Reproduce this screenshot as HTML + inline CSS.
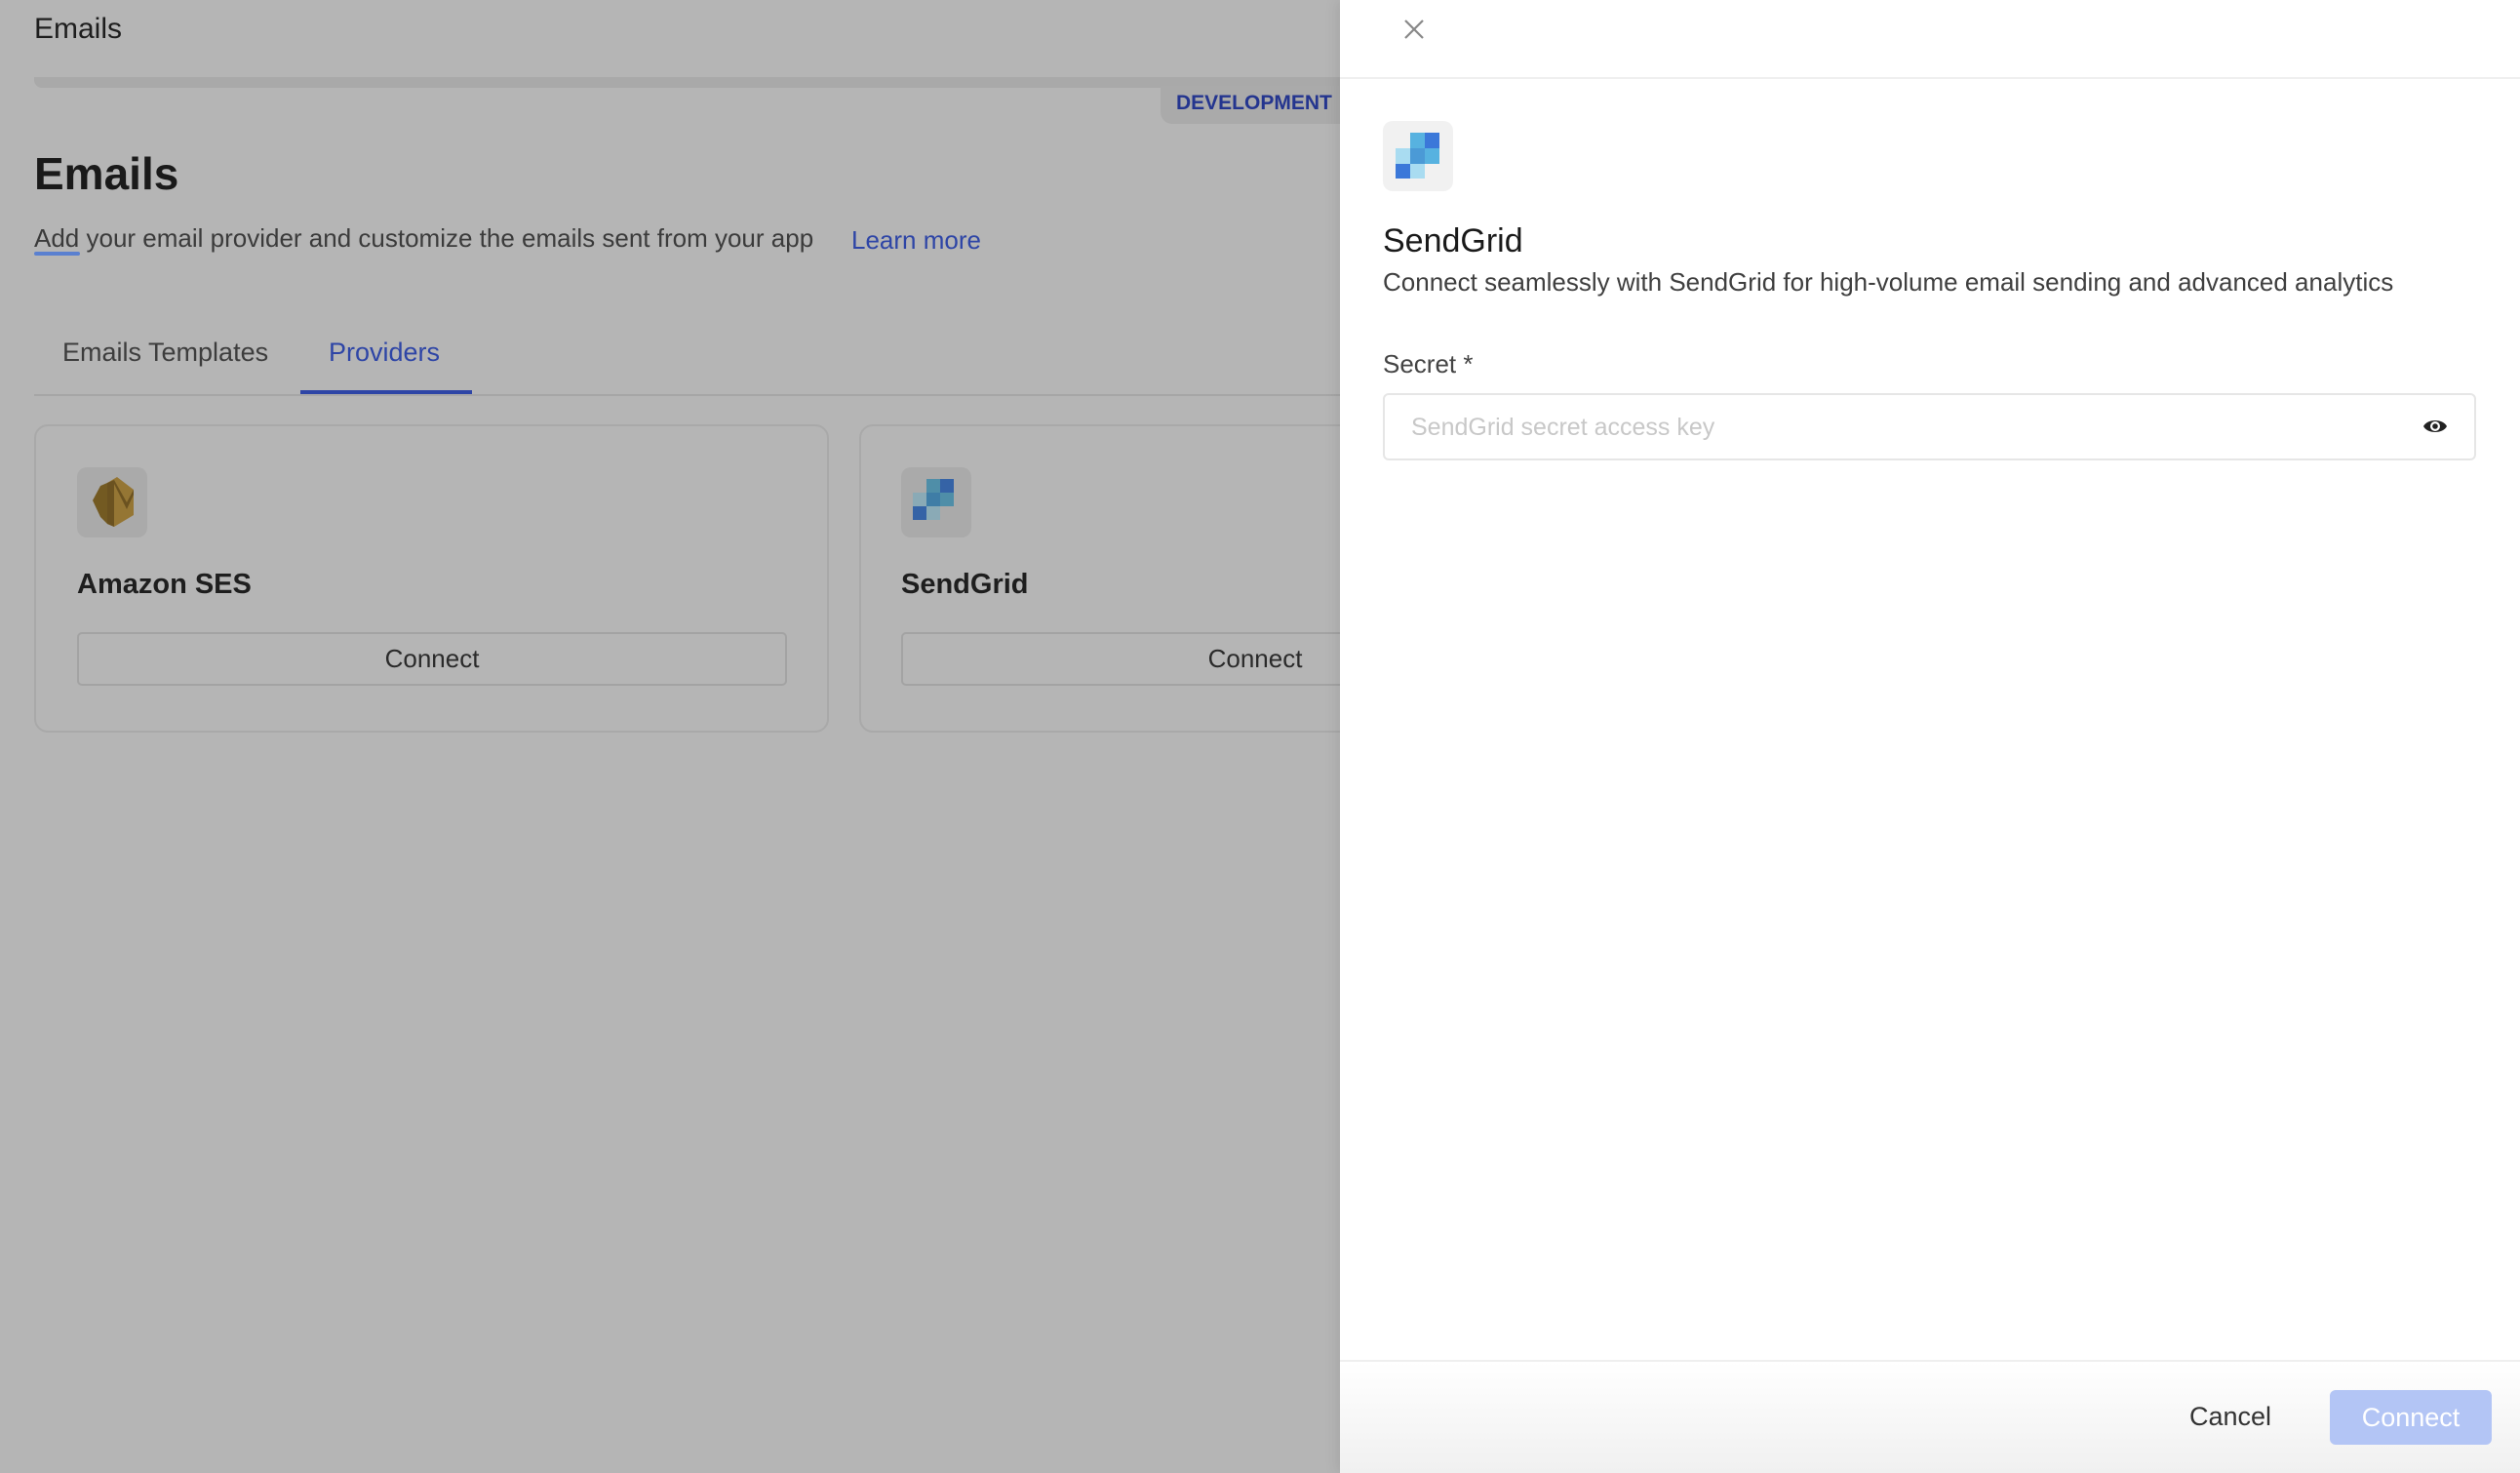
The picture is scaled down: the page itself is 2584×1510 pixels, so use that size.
<!DOCTYPE html>
<html><head><meta charset="utf-8"><style>
*{margin:0;padding:0;box-sizing:border-box}
body{width:2584px;height:1510px;overflow:hidden;background:#b5b5b5;font-family:"Liberation Sans",sans-serif;position:relative}
.a{position:absolute;white-space:nowrap}
</style></head><body>
<div class="a" style="left:35px;top:13px;font-size:30px;color:#1e1e1e">Emails</div>
<div class="a" style="left:35px;top:79px;width:1339px;height:11px;background:#a9a9a9;border-radius:0 0 0 8px"></div>
<div class="a" style="left:1190px;top:88px;width:190px;height:39px;background:#aaaaaa;border-radius:0 0 0 12px"></div>
<div class="a" style="left:1206px;top:94px;font-size:21px;color:#24358f;font-weight:bold">DEVELOPMENT</div>
<div class="a" style="left:35px;top:151px;font-size:46px;font-weight:bold;color:#1a1a1a">Emails</div>
<div class="a" style="left:35px;top:229px;font-size:26px;color:#3b3b3b">Add your email provider and customize the emails sent from your app</div>
<div class="a" style="left:35px;top:258px;width:47px;height:4px;background:#5a80d0;border-radius:2px"></div>
<div class="a" style="left:873px;top:231px;font-size:26px;color:#2e45a6;font-weight:500">Learn more</div>
<div class="a" style="left:64px;top:346px;font-size:27px;color:#3d3d3d;font-weight:500">Emails Templates</div>
<div class="a" style="left:337px;top:346px;font-size:27px;color:#2e45a6;font-weight:500">Providers</div>
<div class="a" style="left:35px;top:404px;width:1339px;height:2px;background:#a6a6a6"></div>
<div class="a" style="left:308px;top:400px;width:176px;height:4px;background:#2e45a6"></div>

<div class="a" style="left:35px;top:435px;width:815px;height:316px;border:2px solid #a9a9a9;border-radius:14px"></div>
<div class="a" style="left:79px;top:479px;width:72px;height:72px;background:#aaaaaa;border-radius:10px">
<svg width="72" height="72" viewBox="79 479 72 72"><polygon points="95,513 103,498 110,495 110,537 103,530" fill="#735a22"/><polygon points="110,495 120,489 137,502 137,528 117,540 110,537" fill="#957634"/><polygon points="110,495 117,492 117,540 110,537" fill="#6b5220"/><polygon points="117,492 130,515 137,502 137,507 130,522 117,496" fill="#6b5220"/></svg></div>
<div class="a" style="left:79px;top:583px;font-size:29px;font-weight:bold;color:#1e1e1e">Amazon SES</div>
<div class="a" style="left:79px;top:648px;width:728px;height:55px;border:2px solid #a3a3a3;border-radius:5px;font-size:26px;color:#2a2a2a;text-align:center;line-height:51px">Connect</div>

<div class="a" style="left:881px;top:435px;width:815px;height:316px;border:2px solid #a9a9a9;border-radius:14px"></div>
<div class="a" style="left:924px;top:479px;width:72px;height:72px;background:#aaaaaa;border-radius:10px">
<svg width="72" height="72" viewBox="0 0 72 72"><rect x="26" y="12" width="14" height="14" fill="#4f8ea8"/><rect x="40" y="12" width="14" height="14" fill="#3563a6"/><rect x="12" y="26" width="14" height="14" fill="#8aaab6"/><rect x="26" y="26" width="14" height="14" fill="#3f7da6"/><rect x="40" y="26" width="14" height="14" fill="#4f8ea8"/><rect x="12" y="40" width="14" height="14" fill="#3563a6"/><rect x="26" y="40" width="14" height="14" fill="#8aaab6"/></svg></div>
<div class="a" style="left:924px;top:583px;font-size:29px;font-weight:bold;color:#1e1e1e">SendGrid</div>
<div class="a" style="left:924px;top:648px;width:726px;height:55px;border:2px solid #a3a3a3;border-radius:5px;font-size:26px;color:#2a2a2a;text-align:center;line-height:51px">Connect</div>

<div class="a" style="left:1374px;top:0;width:1210px;height:1510px;background:#fff;box-shadow:-4px 0 12px rgba(0,0,0,.08)">
<svg class="a" style="left:64px;top:18px" width="24" height="24" viewBox="0 0 24 24"><path d="M3 3L21 21M21 3L3 21" stroke="#888" stroke-width="2.2"/></svg>
<div class="a" style="left:0;top:79px;width:1210px;height:2px;background:#efefef"></div>
<div class="a" style="left:44px;top:124px;width:72px;height:72px;background:#f1f1f1;border-radius:10px">
<svg width="72" height="72" viewBox="0 0 72 72"><rect x="28" y="12" width="15" height="16" fill="#57b2e0"/><rect x="43" y="12" width="15" height="16" fill="#3b78d9"/><rect x="13" y="28" width="15" height="16" fill="#a9dcf1"/><rect x="28" y="28" width="15" height="16" fill="#4b9ad6"/><rect x="43" y="28" width="15" height="16" fill="#57b2e0"/><rect x="13" y="44" width="15" height="15" fill="#3b78d9"/><rect x="28" y="44" width="15" height="15" fill="#a9dcf1"/></svg></div>
<div class="a" style="left:44px;top:228px;font-size:34px;font-weight:500;color:#1a1a1a">SendGrid</div>
<div class="a" style="left:44px;top:274px;font-size:26px;color:#3f3f3f">Connect seamlessly with SendGrid for high-volume email sending and advanced analytics</div>
<div class="a" style="left:44px;top:358px;font-size:26px;color:#444;font-weight:500">Secret *</div>
<div class="a" style="left:44px;top:403px;width:1121px;height:69px;border:2px solid #e6e6e6;border-radius:6px"></div>
<div class="a" style="left:73px;top:424px;font-size:25px;color:#c8c8c8">SendGrid secret access key</div>
<svg class="a" style="left:1110px;top:426px" width="26" height="22" viewBox="0 0 26 22"><path d="M1 11C5 3 21 3 25 11C21 19 5 19 1 11Z" fill="#222"/><circle cx="13" cy="11" r="5" fill="#fff"/><circle cx="13" cy="11" r="2.8" fill="#222"/></svg>
<div class="a" style="left:0;top:1394px;width:1210px;height:2px;background:#efefef"></div>
<div class="a" style="left:0;top:1396px;width:1210px;height:114px;background:linear-gradient(#fff,#f0f0f0)"></div>
<div class="a" style="left:871px;top:1437px;font-size:27px;color:#333;font-weight:500">Cancel</div>
<div class="a" style="left:1015px;top:1425px;width:166px;height:56px;background:#b3c5f5;border-radius:6px;color:#fff;font-size:27px;font-weight:500;text-align:center;line-height:56px">Connect</div>
</div>
</body></html>
